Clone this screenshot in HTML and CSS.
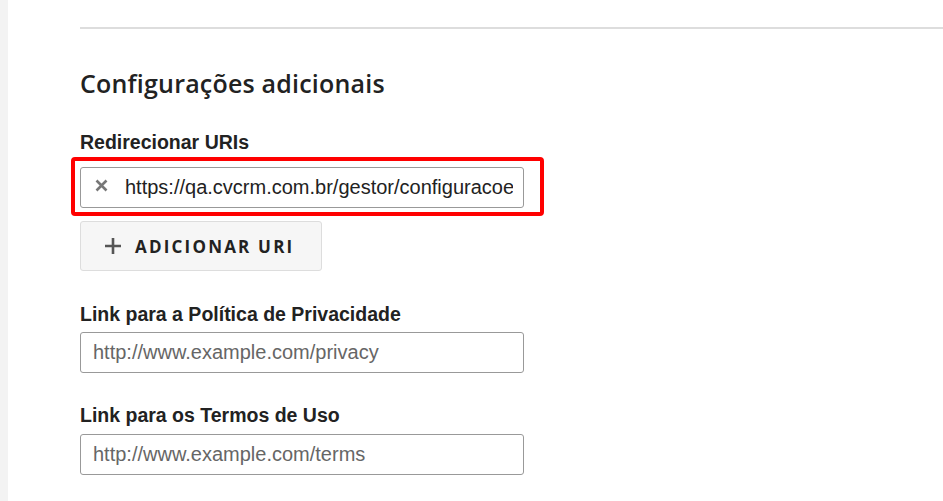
FILE: index.html
```html
<!DOCTYPE html>
<html lang="pt-BR">
<head>
  <meta charset="UTF-8">
  <title>Configurações adicionais</title>
  <link rel="stylesheet" href="styles.css">
</head>
<body>

  <div class="pagina">
    <div class="faixa-lateral"></div>

    <div class="conteudo">
      <div class="divisor"></div>

      <h2>Configurações adicionais</h2>

      <label class="rotulo">Redirecionar URIs</label>
      <div class="uri-linha destaque">
        <span class="remover">
          <svg width="13" height="13" viewBox="0 0 13 13">
            <path d="M1.5 1.5l10 10M11.5 1.5l-10 10" stroke="#777" stroke-width="2.6" fill="none"/>
          </svg>
        </span>
        <input class="uri-valor" type="text" value="https://qa.cvcrm.com.br/gestor/configuracoes/integracoes">
      </div>

      <button class="botao-adicionar" type="button">
        <svg class="icone-mais" width="16" height="16" viewBox="0 0 16 16">
          <path d="M8 0v16M0 8h16" stroke="#555" stroke-width="2.6" fill="none"/>
        </svg>
        <span>ADICIONAR URI</span>
      </button>

      <label class="rotulo rotulo-link">Link para a Política de Privacidade</label>
      <input class="campo" type="text" placeholder="http://www.example.com/privacy">

      <label class="rotulo rotulo-link rotulo-ultimo">Link para os Termos de Uso</label>
      <input class="campo campo-ultimo" type="text" placeholder="http://www.example.com/terms">
    </div>
  </div>

</body>
</html>
```

FILE: styles.css
```css
* {
  box-sizing: border-box;
  margin: 0;
  padding: 0;
}

body {
  font-family: "Liberation Sans", Arial, sans-serif;
  color: #222;
  background-color: #ffffff;
  overflow: hidden;
}

.pagina {
  display: flex;
  height: 100vh;
}

.faixa-lateral {
  width: 8px;
  background-color: #f3f3f3;
}

.conteudo {
  flex: 1;
  padding-left: 72px;
}

.divisor {
  margin-top: 27px;
  height: 2px;
  background-color: #dddddd;
}

.conteudo h2 {
  margin-top: 39px;
  font-family: "Open Sans", sans-serif;
  font-size: 25px;
  font-weight: 600;
  line-height: 30px;
  letter-spacing: 0.2px;
  color: #222;
}

.rotulo {
  display: block;
  margin-top: 34px;
  font-size: 19.5px;
  font-weight: bold;
  line-height: 20px;
  color: #222;
}

.rotulo-link {
  margin-top: 33px;
}

.rotulo-ultimo {
  margin-top: 32px;
}

.uri-linha {
  display: flex;
  align-items: center;
  width: 444px;
  height: 41px;
  margin-top: 15px;
  border: 1px solid #999;
  border-radius: 3px;
  background-color: #fff;
}

/* marcação vermelha da captura */
.destaque {
  position: relative;
}

.destaque::after {
  content: "";
  position: absolute;
  top: -11px;
  left: -10px;
  right: -21px;
  bottom: -9px;
  border: 4px solid #ff0000;
  border-radius: 4px;
}

.remover {
  display: flex;
  width: 44px;
  padding-left: 14px;
  padding-bottom: 4px;
}

.uri-valor {
  flex: 1;
  min-width: 0;
  height: 100%;
  padding-right: 10px;
  border: none;
  outline: none;
  background: transparent;
  font-family: "Liberation Sans", Arial, sans-serif;
  font-size: 20px;
  color: #222;
}

.botao-adicionar {
  display: flex;
  align-items: center;
  gap: 14px;
  width: 242px;
  height: 50px;
  margin-top: 13px;
  padding-left: 24px;
  border: 1px solid #dddddd;
  border-radius: 3px;
  background-color: #f6f6f6;
  font-family: "Open Sans", sans-serif;
  font-size: 17px;
  font-weight: bold;
  letter-spacing: 2.2px;
  color: #222;
}

.campo {
  display: block;
  width: 444px;
  height: 41px;
  margin-top: 8px;
  padding: 0 12px;
  border: 1px solid #999;
  border-radius: 3px;
  font-family: "Liberation Sans", Arial, sans-serif;
  font-size: 20px;
  color: #222;
}

.campo-ultimo {
  margin-top: 9px;
}

.campo::placeholder {
  color: #666;
}
```
